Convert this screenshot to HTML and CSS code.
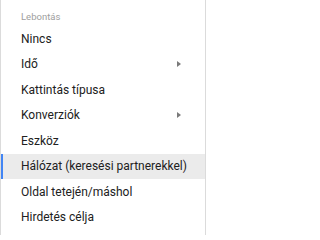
FILE: index.html
```html
<!DOCTYPE html>
<html lang="hu">
<head>
<meta charset="utf-8">
<link rel="stylesheet" href="styles.css">
</head>
<body>
<div class="menu">
  <div class="menu-header">Lebontás</div>
  <div class="menu-item">Nincs</div>
  <div class="menu-item has-sub">Idő<span class="arrow"></span></div>
  <div class="menu-item">Kattintás típusa</div>
  <div class="menu-item has-sub">Konverziók<span class="arrow"></span></div>
  <div class="menu-item">Eszköz</div>
  <div class="menu-item selected">Hálózat (keresési partnerekkel)</div>
  <div class="menu-item">Oldal tetején/máshol</div>
  <div class="menu-item">Hirdetés célja</div>
</div>
</body>
</html>
```
FILE: styles.css
```css
html {
  background: #fff;
}
html, body {
  margin: 0;
  padding: 0;
}
body {
  width: 206px;
  height: 235px;
  overflow: hidden;
  background-color: #fff;
  background-image: linear-gradient(#c8c8c8 0 1px, transparent 1px);
  background-size: 100% 33px;
  background-position: 0 4px;
  font-family: Roboto, "Liberation Sans", sans-serif;
}
.menu {
  width: 206px;
  background: #fff;
  border-left: 1px solid rgba(0, 0, 0, 0.14);
  border-right: 1px solid rgba(0, 0, 0, 0.14);
  height: 235px;
  box-sizing: border-box;
  padding-top: 10px;
}
.menu-header {
  font-size: 9.5px;
  line-height: 13px;
  padding-bottom: 3px;
  color: #9e9e9e;
  padding-left: 20px;
}
.menu-item {
  display: flex;
  align-items: center;
  justify-content: space-between;
  height: 25.5px;
  padding: 0 24px 0 20px;
  font-size: 12px;
  color: #212121;
  white-space: nowrap;
}
.menu-item.selected {
  background: #ebebeb;
  box-shadow: inset 2px 0 0 #4285f4;
}
.arrow {
  width: 0;
  height: 0;
  border-left: 4px solid #7a7a7a;
  border-top: 3.5px solid transparent;
  border-bottom: 3.5px solid transparent;
}
```
